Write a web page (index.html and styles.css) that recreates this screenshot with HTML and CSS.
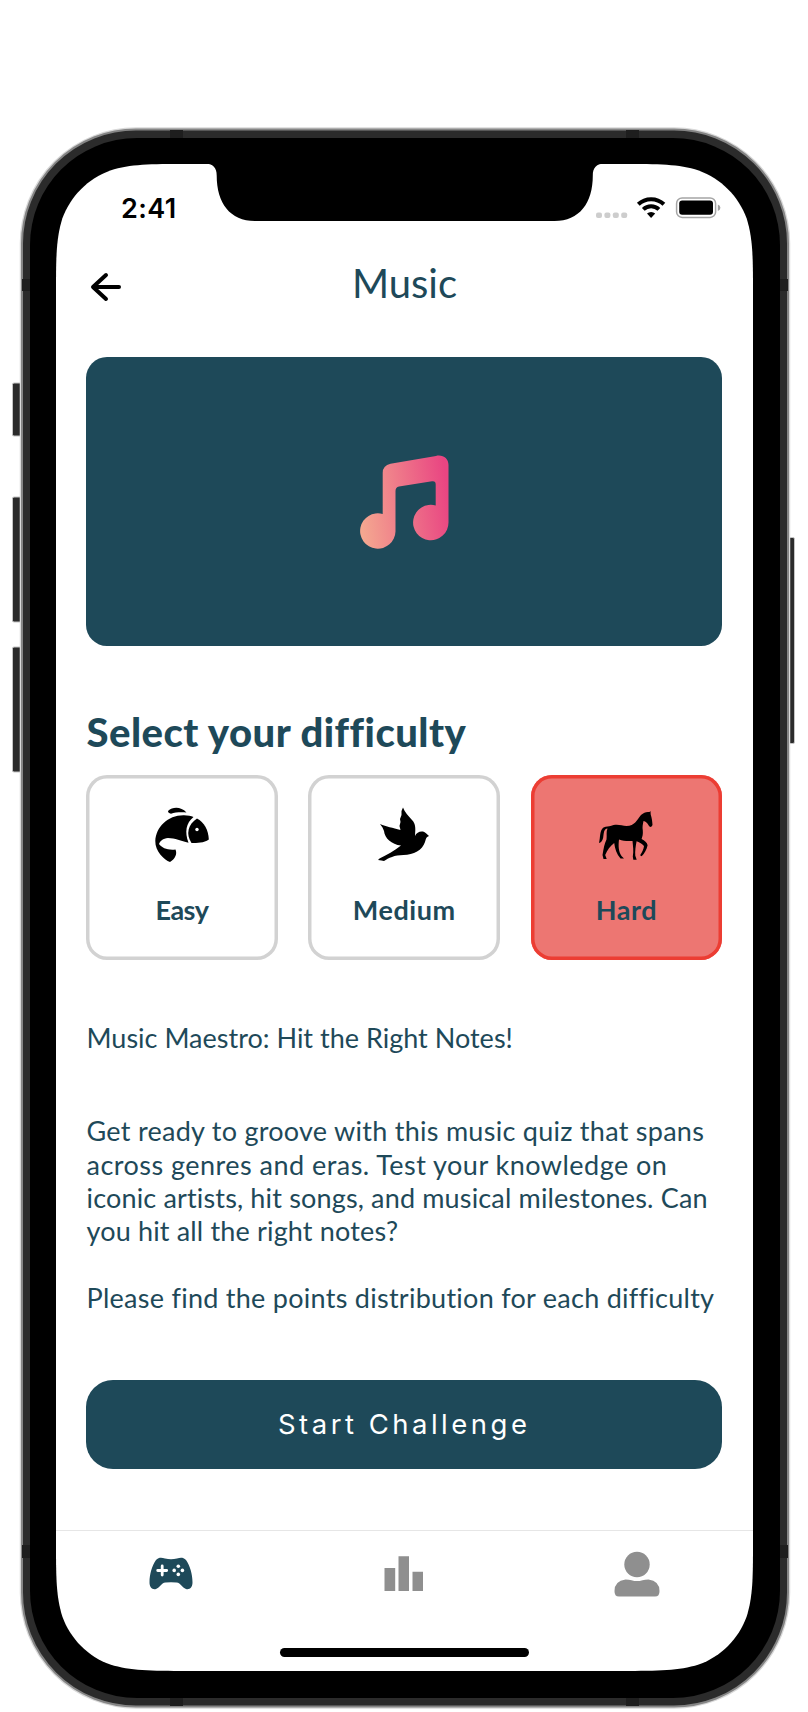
FILE: index.html
```html
<!DOCTYPE html>
<html lang="en">
<head>
<meta charset="utf-8">
<title>Music quiz</title>
<link rel="stylesheet" href="styles.css">
</head>
<body>
<div class="stage">
  <svg class="frame" width="808" height="1712" viewBox="0 0 808 1712" aria-hidden="true">
    <g fill="#2b2b2b" stroke="#c4c4c4" stroke-width="1">
      <rect x="12.500" y="383" width="12" height="53" rx="1.500"/>
      <rect x="12.500" y="497" width="12" height="125" rx="1.500"/>
      <rect x="12.500" y="647" width="12" height="125" rx="1.500"/>
      <rect x="785" y="537.500" width="9.500" height="206" rx="1.500"/>
    </g>
    <rect class="glow" x="22" y="129.500" width="766" height="1577" rx="114"/>
    <rect class="rim" x="22" y="129.500" width="766" height="1577" rx="114"/>
    <g fill="#1e1e1e">
      <rect x="170" y="130" width="13" height="9"/><rect x="626" y="130" width="13" height="9"/>
      <rect x="170" y="1697" width="13" height="9"/><rect x="626" y="1697" width="13" height="9"/>
      <rect x="22" y="279" width="9" height="12"/><rect x="779" y="279" width="9" height="12"/>
      <rect x="22" y="1545" width="9" height="13"/><rect x="779" y="1545" width="9" height="13"/>
    </g>
    <rect x="30" y="138" width="750" height="1560" rx="107"/>
    <path fill="#fff" d="M56 295.500c0-37.900 0-56.800 6.400-77.200c8.100-22.200 25.600-39.800 47.900-47.900c20.400-6.400 39.300-6.400 77.200-6.400H621.500c37.900 0 56.800 0 77.200 6.400c22.200 8.100 39.800 25.600 47.900 47.900c6.400 20.400 6.400 39.300 6.400 77.200V1539.500c0 37.900 0 56.800-6.400 77.200c-8.100 22.200-25.600 39.800-47.900 47.900c-20.400 6.400-39.300 6.400-77.200 6.400H187.500c-37.900 0-56.800 0-77.200-6.400c-22.200-8.100-39.800-25.600-47.900-47.900c-6.400-20.400-6.400-39.300-6.400-77.200z"/>
    <path fill="#000" d="M204 163.500C213.500 163.500 216.700 168 216.700 175.500C216.700 203 230 221 255 221H554.500C579.500 221 592.800 203 592.800 175.500C592.800 168 596 163.500 605.500 163.500z"/>
  </svg>

  <main class="screen">
    <div class="status">
      <span class="time">2:41</span>
      <svg class="signals" width="128" height="26" viewBox="0 0 128 26">
        <g fill="#cdcdcd"><rect x="0" y="17.500" width="6" height="5.500" rx="2"/><rect x="8.400" y="17.500" width="6" height="5.500" rx="2"/><rect x="16.800" y="17.500" width="6" height="5.500" rx="2"/><rect x="25.200" y="17.500" width="6" height="5.500" rx="2"/></g>
        <g fill="none" stroke="#000" stroke-width="4"><path d="M42.300 9.300a18.500 18.500 0 0 1 25.600 0"/><path d="M47.300 14.400a11.300 11.300 0 0 1 15.600 0"/></g>
        <path d="M51 18.600a6 6 0 0 1 8.200 0L55.100 23z"/>
        <rect x="80.600" y="2.900" width="39" height="19.500" rx="5.500" fill="none" stroke="#a5a5a5" stroke-width="1.500"/>
        <rect x="83.200" y="5.600" width="33.800" height="14.200" rx="3"/>
        <path d="M121.800 9.400q2.600 1 2.600 3.300t-2.600 3.300z" fill="#a0a0a0"/>
      </svg>
    </div>

    <header class="header">
      <svg class="back" width="32" height="30" viewBox="0 0 32 30"><path d="M16 3L3 15l13 12M4 15H29" fill="none" stroke="#000" stroke-width="4" stroke-linecap="round" stroke-linejoin="round"/></svg>
      <h1 class="title">Music</h1>
    </header>

    <section class="hero">
      <svg width="90" height="96" viewBox="0 0 90 96">
        <defs><linearGradient id="tune" gradientUnits="userSpaceOnUse" x1="0" y1="60" x2="89" y2="48"><stop offset="0" stop-color="#f4a790"/><stop offset="1" stop-color="#e94582"/></linearGradient></defs>
        <path fill="url(#tune)" d="M22.700 61V20Q22.700 12.500 30.500 10.800L76 2.900C83 1.400 88.500 5.500 88.500 12V69.500A17.700 17.700 0 1 1 75.700 52.500V31.500Q75.700 27.700 72 28.300L39 33.600Q35.500 34.400 35.500 38V78.500A17.700 17.700 0 1 1 22.700 61z"/>
      </svg>
    </section>

    <h2 class="heading">Select your difficulty</h2>
    <div class="levels">
      <button class="level">
        <svg width="56" height="56" viewBox="0 0 56 56">
          <path d="M14 4C19-.5 27-.3 32.500 5.500C26 5 21 5.500 17 6.700C15 6 14 5.500 14 4z"/>
          <path d="M1.300 34C2 20 14 8 30 8.300C34 8.300 37 9 39.500 10C32 16 30.500 25 34.500 35.700C27 34 21 31 14 31C9 31.500 6 34 5 37C8 41 14 43.500 21.500 42.500C23.500 47 21 52 16 55C10 53 1 44 1.300 34z"/>
          <path d="M43 11.500C50 15 54.500 23 54.800 32.500C50 36 43 36 37.500 36C31.500 27 34 17.500 43 11.500z"/>
          <circle cx="43" cy="22.500" r="1.700" fill="#fff"/>
        </svg>
        <span class="label easy">Easy</span>
      </button>
      <button class="level">
        <svg width="56" height="56" viewBox="1.500 0 56 56">
          <path d="M28.500.5C30 5 34 9 37.500 13C41.500 17 41 22 40.500 29C42 25.500 45 24 48.500 24.500C51 25 52 27 54.500 29C51.500 30 51.500 32 50.500 35C48 43 39 48 29 48C20 48 14 51 9.500 54L7 53.500L3.500 53L5 51.500C12 48 20 44 26.500 38.500C17 37.500 10 31 9.500 24L8 20.500L5.500 17C12 20 18 20.500 26 23L25 19L26 15L25.500 12L27 8L27 4z"/>
        </svg>
        <span class="label medium">Medium</span>
      </button>
      <button class="level selected">
        <svg width="56" height="56" viewBox="-.500 -2 56 56">
          <path d="M52 2l.2 3.500c1.200 3.500 1.600 7 1.800 10.500-1 2.500-2.800 2.500-3.800.5-1.300-2.500-3-4-5.200-4.500-.7 3.500-1.300 6-.7 9.500.3 3.500-.3 6-1.200 8.500 3 1.500 5.500 3.500 6 6.200-1 4.300-3 8.300-6 11l-1.500-1c2-3 3.500-6 3.900-9.300-2.300-2.600-5-4-7.400-4.700-1 5-1.700 10-1.300 14.500l1.400 4h-3.400l-.5-3.300c1-5.500.2-10-.3-15.500-5.500.5-9.500-.2-13.500-1.500-.8 6.500-.5 12 2.500 16.500l2.500 2.500h-3.500c-4-4.500-5.500-9.500-6.300-15.500-4 3-7 7-9 12l1.500 4H5l-1-4c1-6.500 2-11.500 4-15.500C8.500 26.500 7.500 22.500 9 19.500c-4 .5-3.500 4.500-4.400 9.500C3.800 32 2.500 33.500.5 34c1.500-6 .5-13 4.500-15.500 3-1.700 5.500-.6 7-1.500 5-2.500 10.500-1 16 0 8.500-.4 10-5.500 14.500-11 3-2.600 5-3.400 8.500-3z"/>
        </svg>
        <span class="label hard">Hard</span>
      </button>
    </div>

    <p class="copy lead"><span class="tight">Music Maestro: Hit the Right Notes!</span></p>
    <p class="copy"><span class="wide">Get ready to groove with this music quiz that spans</span><br><span class="widest">across genres and eras. Test your knowledge on</span><br><span class="normal">iconic artists, hit songs, and musical milestones. Can</span><br><span class="normal">you hit all the right notes?</span></p>
    <p class="copy points"><span class="wide">Please find the points distribution for each difficulty</span></p>

    <button class="start">Start Challenge</button>

    <nav class="tabs">
      <svg width="46" height="46" viewBox="0 0 46 46" fill="#1e4959">
        <path d="M8 9C11 5.800 14 6.500 17 7.500Q23 8.800 29 7.500C32 6.500 35 5.800 38 9C42 15 44.500 23 44.500 31.500C44.500 36.500 41.500 39 38 38C34 36.500 33 32 28.500 31.500Q23 30.800 17.500 31.500C13 32 12 36.500 8 38C4.500 39 1.500 36.500 1.500 31.500C1.500 23 4 15 8 9z"/>
        <path d="M9.700 19.500h9M14.200 15v9" fill="none" stroke="#fff" stroke-width="2.800" stroke-linecap="round"/>
        <g fill="#fff"><circle cx="30.300" cy="15.300" r="1.800"/><circle cx="30.300" cy="23.400" r="1.800"/><circle cx="26.200" cy="19.400" r="1.800"/><circle cx="34.400" cy="19.400" r="1.800"/></g>
      </svg>
      <svg width="40" height="46" viewBox="0 0 40 46" fill="#8f8f8f"><path d="M.500 17H11.200V40H.500zM14.500 5.300H25V40H14.500zM28.500 20.700H39V40H28.500z"/></svg>
      <svg width="46" height="46" viewBox="0 0 46 46" fill="#8f8f8f"><circle cx="23" cy="13.500" r="12.700"/><path d="M11.500 28.500Q15 28.500 17.500 29.200Q23 31 28.500 29.200Q31 28.500 34.500 28.500Q45.500 30 45.500 40Q45.700 45.500 41 45.500H5Q.3 45.500 .5 40Q.5 30 11.500 28.500z"/></svg>
    </nav>
    <div class="home"></div>
  </main>
</div>
</body>
</html>
```
FILE: styles.css
```css
* { box-sizing: border-box; }
body { margin: 0; background: #fff; }
.stage { position: relative; width: 808px; height: 1712px; overflow: hidden; padding: 164px 55px 0 56px; }
.frame { position: absolute; inset: 0; }
.glow { fill: none; stroke: #d9d9d9; stroke-width: 4.5; }
.rim { fill: #2b2b2b; stroke: #858585; stroke-width: 2; }
.screen { position: relative; display: flex; flex-direction: column; height: 1507px; font-family: Lato, "Open Sans", sans-serif; color: #1e4959; }
.status { display: flex; justify-content: space-between; align-items: flex-start; height: 86px; padding: 31px 29px 0 65px; }
.time { font: 600 27px/27px Inter, sans-serif; letter-spacing: 0.4px; color: #000; }
.header { display: grid; grid-template-columns: 48px 1fr 48px; align-items: start; height: 72px; padding: 9px 32px 0 34px; }
.back { margin-top: 13px; }
.title { margin: 0; padding-right: 2px; text-align: center; font-size: 40px; line-height: 48px; font-weight: 400; }
.hero { display: flex; align-items: center; justify-content: center; height: 289px; margin: 35px 30.8px 0 30.2px; padding: 0 0 2px 1px; border-radius: 21px; background: #1e4959; }
.heading { margin: 62px 30.5px 0; font-size: 40px; line-height: 48px; font-weight: 900; letter-spacing: 0.48px; white-space: nowrap; }
.levels { display: grid; grid-template-columns: repeat(3, 191.500px); justify-content: space-between; margin: 19px 30.8px 0 30.2px; }
.level { display: flex; flex-direction: column; align-items: center; height: 185px; padding: 32px 0 0; border: 0; border-radius: 21px; box-shadow: inset 0 0 0 3.5px #d2d2d2; background: #fff; font-family: inherit; color: inherit; }
.selected { box-shadow: inset 0 0 0 3.5px #ec3d33; background: #ed7672; }
.label { margin-top: 31px; font-size: 27px; line-height: 32px; font-weight: 700; }
.easy { letter-spacing: -0.5px; }
.medium { letter-spacing: 0.55px; }
.hard { letter-spacing: 0.6px; }
.copy { margin: 60px 30.5px 0; font-size: 27px; line-height: 33.3px; white-space: nowrap; }
.lead { margin-top: 61px; }
.points { margin-top: 34px; }
.tight { letter-spacing: 0.01px; }
.normal { letter-spacing: 0.16px; }
.wide { letter-spacing: 0.27px; }
.widest { letter-spacing: 0.47px; }
.start { height: 89px; margin: 65px 30.8px 0 30.2px; padding: 0; border: 0; border-radius: 27px; background: #1e4959; color: #fff; font: 400 27.5px/89px Inter, sans-serif; letter-spacing: 3.5px; }
.tabs { display: flex; justify-content: space-between; height: 118px; margin-top: 61px; padding: 20px 93px 0 92px; border-top: 1px solid #e6e6e6; }
.home { width: 249px; height: 9px; margin: 0 auto; border-radius: 5px; background: #000; }
```
